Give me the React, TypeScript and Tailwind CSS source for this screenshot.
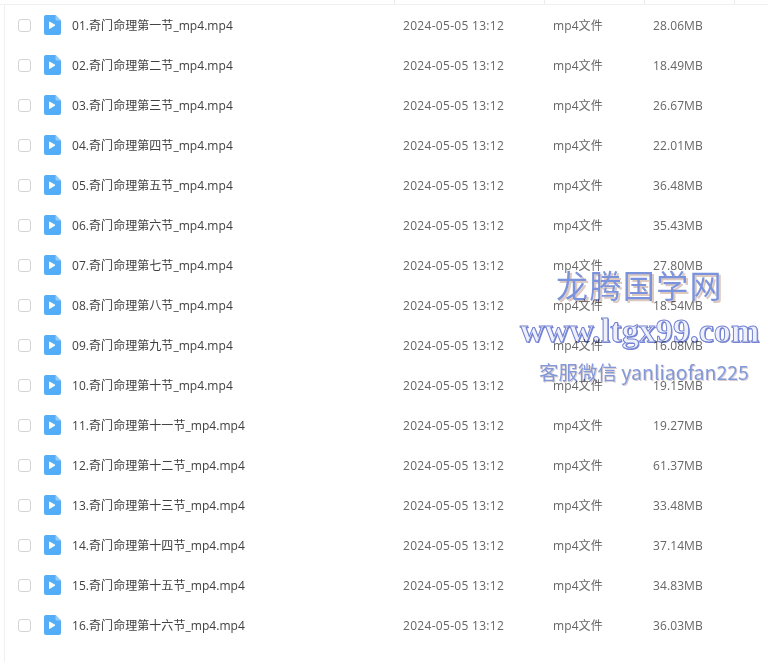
const rows = [
  ["01", "一", "28.06MB"],
  ["02", "二", "18.49MB"],
  ["03", "三", "26.67MB"],
  ["04", "四", "22.01MB"],
  ["05", "五", "36.48MB"],
  ["06", "六", "35.43MB"],
  ["07", "七", "27.80MB"],
  ["08", "八", "18.54MB"],
  ["09", "九", "16.08MB"],
  ["10", "十", "19.15MB"],
  ["11", "十一", "19.27MB"],
  ["12", "十二", "61.37MB"],
  ["13", "十三", "33.48MB"],
  ["14", "十四", "37.14MB"],
  ["15", "十五", "34.83MB"],
  ["16", "十六", "36.03MB"],
];

function VideoIcon() {
  return (
    <svg width="17" height="20" viewBox="0 0 17 20" className="shrink-0">
      <path d="M2 0H11.5L17 5.5V18A2 2 0 0 1 15 20H2A2 2 0 0 1 0 18V2A2 2 0 0 1 2 0Z" fill="#54ADF7" />
      <path d="M11.5 0L17 5.5H13A1.5 1.5 0 0 1 11.5 4Z" fill="#93CEFB" />
      <path d="M5.5 7L11 10.2L5.5 13.4Z" fill="#FFFFFF" stroke="#FFFFFF" strokeWidth="1" strokeLinejoin="round" />
    </svg>
  );
}

export default function App() {
  return (
    <div className="relative w-[768px] h-[662px] overflow-hidden bg-white font-['Open_Sans','Noto_Sans_CJK_SC',sans-serif] text-[12px]">
      <div className="flex h-[5px] border-b border-[#f0f0f0]">
        <div className="w-[395px] border-r border-[#ececec]" />
        <div className="w-[150px] border-r border-[#ececec]" />
        <div className="w-[100px] border-r border-[#ececec]" />
        <div className="w-[90px] border-r border-[#ececec]" />
      </div>
      <div className="ml-[4px] border-l border-[#f0f0f0] h-[657px]">
        {rows.map(([n, c, size]) => (
          <div key={n} className="flex h-[40px] items-center pt-[1px]">
            <div className="ml-[13px] w-[13px] h-[13px] rounded-[3px] border border-[#d4d4d4] bg-white shrink-0" />
            <div className="ml-[13px] mb-[1px]"><VideoIcon /></div>
            <div className="ml-[11px] w-[331px] text-[#3f3f3f] whitespace-nowrap tracking-[0.05px]">{`${n}.奇门命理第${c}节_mp4.mp4`}</div>
            <div className="w-[150px] text-[#666666] whitespace-nowrap tracking-[0.3px]">2024-05-05 13:12</div>
            <div className="w-[100px] text-[#666666] whitespace-nowrap tracking-[0.1px]">mp4文件</div>
            <div className="text-[#666666] whitespace-nowrap tracking-[0.1px]">{size}</div>
          </div>
        ))}
      </div>
      <div className="absolute left-[556px] top-[262px] text-[32px] leading-[44px] tracking-[1.4px] text-[#7b93dc] font-['Noto_Sans_CJK_SC',sans-serif] whitespace-nowrap mix-blend-multiply [text-shadow:2px_2px_0_#dcc9c0]">龙腾国学网</div>
      <div className="absolute left-[520px] top-[311px] text-[34px] leading-[40px] tracking-[0.1px] text-[#eef0fb] font-['Liberation_Serif',serif] font-bold whitespace-nowrap mix-blend-multiply [-webkit-text-stroke:1px_#7483d3] [text-shadow:1px_1px_0_#7483d3]">www.ltgx99.com</div>
      <div className="absolute left-[539px] top-[358px] text-[19.5px] leading-[28px] text-[#8298d8] font-['Noto_Sans_CJK_SC',sans-serif] whitespace-nowrap mix-blend-multiply [text-shadow:1px_1px_0_#d9cfd0]">客服微信 yanliaofan225</div>
    </div>
  );
}
